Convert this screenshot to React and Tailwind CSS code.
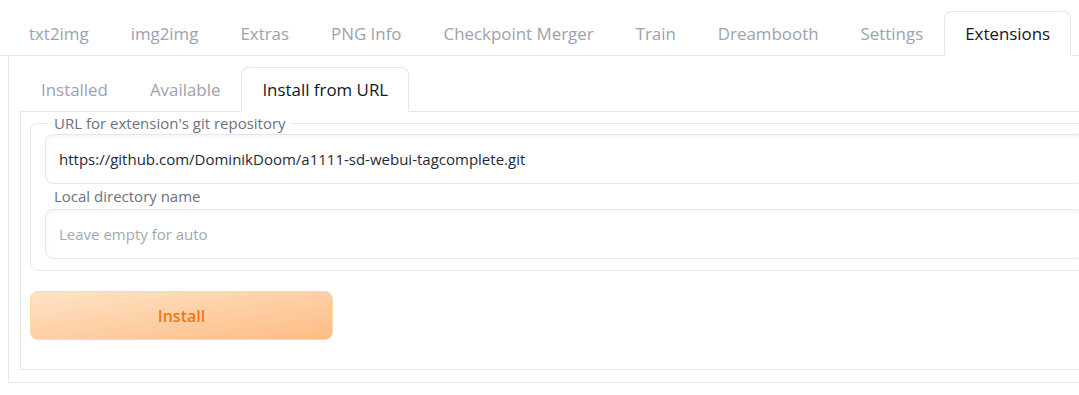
import React, { useState } from 'react';

const TABS = ['txt2img', 'img2img', 'Extras', 'PNG Info', 'Checkpoint Merger', 'Train', 'Dreambooth', 'Settings', 'Extensions'];
const SUBTABS = ['Installed', 'Available', 'Install from URL'];

function App() {
  const [tab, setTab] = useState('Extensions');
  const [subtab, setSubtab] = useState('Install from URL');
  const [url, setUrl] = useState('https://github.com/DominikDoom/a1111-sd-webui-tagcomplete.git');
  const [dir, setDir] = useState('');

  return (
    <div className="h-[395px] w-full overflow-hidden bg-white font-['Open_Sans',sans-serif]">
      <div className="w-[1120px]">
        {/* Top tabs */}
        <div className="flex h-[56px] items-end border-b border-[#e5e7eb] px-2">
          {TABS.map(t => (
            <button
              key={t}
              onClick={() => setTab(t)}
              className={`-mb-px h-[45px] rounded-t-lg border px-5 text-[16.9px] ${tab === t ? 'border-[#e5e7eb] border-b-white bg-white text-[#111827]' : 'border-transparent text-[#9ca3af]'}`}
            >
              {t}
            </button>
          ))}
        </div>

        {/* Outer panel */}
        <div className="mx-2 border border-t-0 border-[#e5e7eb] px-[11px] pt-[11px] pb-3">
          {/* Sub tabs */}
          <div className="flex h-[45px] items-end border-b border-[#e5e7eb]">
            {SUBTABS.map(t => (
              <button
                key={t}
                onClick={() => setSubtab(t)}
                className={`-mb-px h-[45px] rounded-t-lg border px-5 text-[16.9px] ${subtab === t ? 'border-[#e5e7eb] border-b-white bg-white text-[#111827]' : 'border-transparent text-[#9ca3af]'}`}
              >
                {t}
              </button>
            ))}
          </div>

          {/* Inner panel */}
          <div className="border border-t-0 border-[#e5e7eb] pl-[9px] pt-[1px] pb-[29px]">
            <fieldset className="rounded-lg border border-[#e5e7eb] px-[14px] pb-[11px]">
              <legend className="ml-[3px] px-1.5 text-[15px] leading-5 text-[#6b7280]">URL for extension's git repository</legend>
              <input
                value={url}
                onChange={e => setUrl(e.target.value)}
                className="mt-[1px] block h-[50px] w-full rounded-lg border border-[#e5e7eb] px-[13px] text-[15px] text-[#1f2937] shadow-[inset_0_2px_4px_rgba(0,0,0,0.04)] outline-none"
              />
              <div className="mt-[2px] mb-[3px] pl-[9px] text-[15px] leading-5 text-[#6b7280]">Local directory name</div>
              <input
                value={dir}
                onChange={e => setDir(e.target.value)}
                placeholder="Leave empty for auto"
                className="block h-[50px] w-full rounded-lg border border-[#e5e7eb] px-[13px] text-[15px] text-[#1f2937] placeholder:text-[#a3a8b0] shadow-[inset_0_2px_4px_rgba(0,0,0,0.04)] outline-none"
              />
            </fieldset>

            <button className="mt-[20px] h-[49px] w-[303px] rounded-lg border border-[#fed7aa] bg-linear-to-br from-[#fee3c6] to-[#fdbc84] text-[16px] font-semibold text-[#ea7a17]">
              Install
            </button>
          </div>
        </div>
      </div>
    </div>
  );
}

export default App;
